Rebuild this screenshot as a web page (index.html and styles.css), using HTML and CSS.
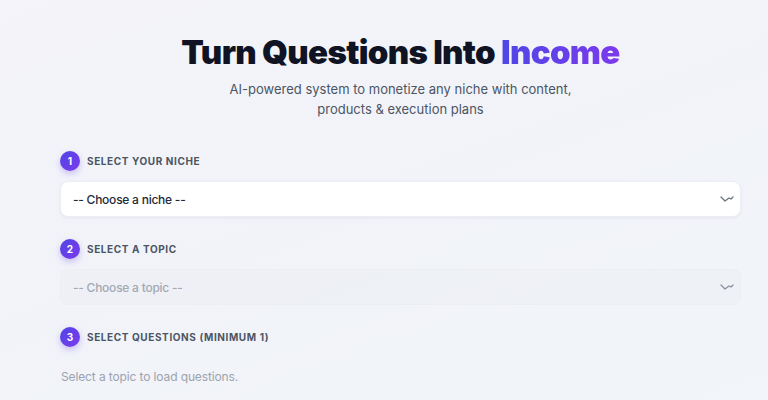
FILE: index.html
```html
<!DOCTYPE html>
<html lang="en">
<head>
<meta charset="utf-8">
<title>Turn Questions Into Income</title>
<link rel="stylesheet" href="styles.css">
</head>
<body>
<main class="page">
  <header class="hero">
    <h1 class="title">Turn Questions Into <span class="accent">Income</span></h1>
    <p class="subtitle">AI-powered system to monetize any niche with content,<br>products &amp; execution plans</p>
  </header>

  <section class="step">
    <div class="step-head"><span class="badge">1</span><span class="label">Select Your Niche</span></div>
    <div class="field">
      <select class="control">
        <option>-- Choose a niche --</option>
      </select>
      <svg class="chev" width="14" height="8" viewBox="0 0 14 8"><polyline points="1,2 5,6 9,3 11,4 13,2" fill="none" stroke="#6b7280" stroke-width="1.3" stroke-linecap="round" stroke-linejoin="round"/></svg>
    </div>
  </section>

  <section class="step">
    <div class="step-head"><span class="badge">2</span><span class="label">Select a Topic</span></div>
    <div class="field">
      <select class="control" disabled>
        <option>-- Choose a topic --</option>
      </select>
      <svg class="chev" width="14" height="8" viewBox="0 0 14 8"><polyline points="1,2 5,6 9,3 11,4 13,2" fill="none" stroke="#8b919c" stroke-width="1.3" stroke-linecap="round" stroke-linejoin="round"/></svg>
    </div>
  </section>

  <section class="step">
    <div class="step-head"><span class="badge">3</span><span class="label">Select Questions (Minimum 1)</span></div>
    <p class="hint">Select a topic to load questions.</p>
  </section>
</main>
</body>
</html>
```

FILE: styles.css
```css
html, body {
  margin: 0;
  padding: 0;
}
body {
  height: 400px;
  overflow: hidden;
  background: linear-gradient(160deg, #f4f4fa 0%, #f1f3f9 50%, #f2f5f9 100%);
  font-family: Inter, "Noto Sans", sans-serif;
  color: #111827;
}
.page {
  width: 681px;
  margin-left: 60px;
  padding-top: 33px;
}
.hero {
  text-align: center;
}
.title {
  margin: 0;
  font-size: 33px;
  line-height: 38px;
  font-weight: 900;
  letter-spacing: -0.02em;
  color: #0f1324;
}
.accent {
  background: linear-gradient(90deg, #4f46e5, #7c3aed);
  -webkit-background-clip: text;
  background-clip: text;
  color: transparent;
}
.subtitle {
  margin: 8px 0 0;
  font-size: 13px;
  line-height: 20px;
  color: #4b5563;
}
.step {
  margin-top: 22px;
}
.hero + .step {
  margin-top: 32px;
}
.step-head {
  display: flex;
  align-items: center;
  gap: 7px;
  height: 20px;
}
.badge {
  width: 20px;
  height: 20px;
  border-radius: 50%;
  background: linear-gradient(135deg, #4f46e5, #7c3aed);
  color: #fff;
  font-size: 10px;
  font-weight: 700;
  display: flex;
  align-items: center;
  justify-content: center;
  box-shadow: 0 3px 6px rgba(99, 70, 230, 0.3);
}
.label {
  font-size: 10px;
  font-weight: 700;
  letter-spacing: 0.06em;
  text-transform: uppercase;
  color: #4b5563;
}
.field {
  position: relative;
  margin-top: 10px;
}
.control {
  -webkit-appearance: none;
  appearance: none;
  display: block;
  width: 100%;
  height: 36px;
  padding: 0 30px 0 12px;
  border: 1px solid #eceef3;
  border-radius: 8px;
  background: #ffffff;
  box-shadow: 0 1px 3px rgba(15, 23, 42, 0.06);
  font-family: Inter, "Noto Sans", sans-serif;
  font-size: 12px;
  font-weight: 500;
  letter-spacing: -0.02em;
  color: #1f2937;
  outline: none;
}
.control:disabled {
  background: rgba(236, 238, 244, 0.6);
  border-color: #eceef3;
  box-shadow: none;
  color: #a3a8b3;
  opacity: 1;
}
.chev {
  position: absolute;
  right: 7px;
  top: 14px;
  pointer-events: none;
}
.hint {
  margin: 21px 0 0 1px;
  font-size: 12px;
  line-height: 18px;
  letter-spacing: -0.01em;
  color: #9ca3af;
}
```
